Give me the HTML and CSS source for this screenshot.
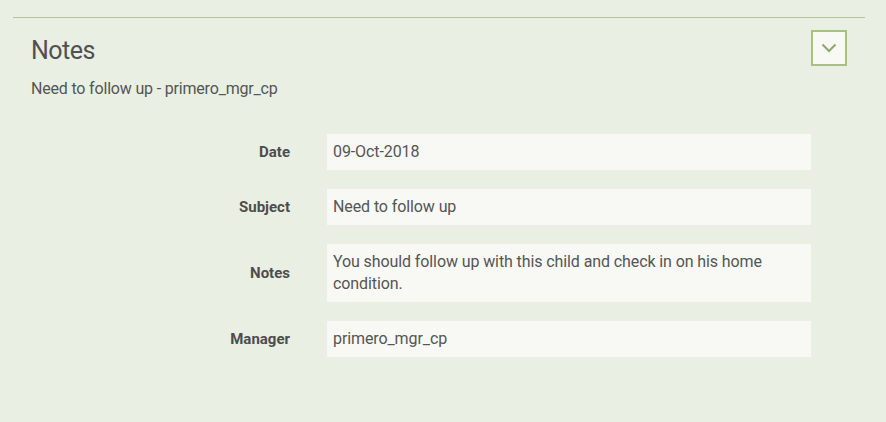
FILE: index.html
```html
<!DOCTYPE html>
<html>
<head>
<meta charset="utf-8">
<link rel="stylesheet" href="styles.css">
</head>
<body>
<div class="panel">
  <div class="header">
    <div class="titles">
      <h2 class="title">Notes</h2>
      <div class="subtitle">Need to follow up - primero_mgr_cp</div>
    </div>
    <button class="toggle" aria-label="Collapse">
      <svg width="16" height="10" viewBox="0 0 16 10"><path d="M1.5 1.5 L8 8 L14.5 1.5" fill="none" stroke="#8fa86a" stroke-width="2"/></svg>
    </button>
  </div>
  <div class="fields">
    <div class="label">Date</div>
    <div class="value">09-Oct-2018</div>
    <div class="label">Subject</div>
    <div class="value">Need to follow up</div>
    <div class="label">Notes</div>
    <div class="value">You should follow up with this child and check in on his home condition.</div>
    <div class="label">Manager</div>
    <div class="value">primero_mgr_cp</div>
  </div>
</div>
</body>
</html>
```
FILE: styles.css
```css
html, body {
  margin: 0;
  padding: 0;
  background: #e9efe3;
  font-family: Roboto, "Noto Sans", sans-serif;
  color: #555;
}
.panel {
  margin: 17px 21px 0 13px;
  border-top: 1px solid #b3c39b;
}
.header {
  display: flex;
  justify-content: space-between;
  align-items: flex-start;
  padding: 12px 18px 0 18px;
}
.title {
  margin: 0;
  font-size: 25px;
  letter-spacing: -0.5px;
  font-weight: 400;
  line-height: 42px;
  color: #505050;
}
.subtitle {
  font-size: 16px;
  letter-spacing: -0.18px;
  line-height: 20px;
  margin-top: 7px;
  color: #555;
}
.toggle {
  width: 36px;
  height: 36px;
  box-sizing: border-box;
  border: 2px solid #a9c180;
  background: #f8f9f5;
  padding: 0;
  margin-top: 0;
  display: flex;
  align-items: center;
  justify-content: center;
}
.fields {
  display: grid;
  grid-template-columns: 277px 484px;
  column-gap: 37px;
  row-gap: 19px;
  margin-top: 35px;
  align-items: center;
}
.label {
  text-align: right;
  font-weight: 700;
  font-size: 15px;
  color: #4d4d4d;
}
.value {
  background: #f8f9f4;
  padding: 7px 6px;
  font-size: 16px;
  letter-spacing: -0.1px;
  line-height: 22px;
  color: #555;
}
```
